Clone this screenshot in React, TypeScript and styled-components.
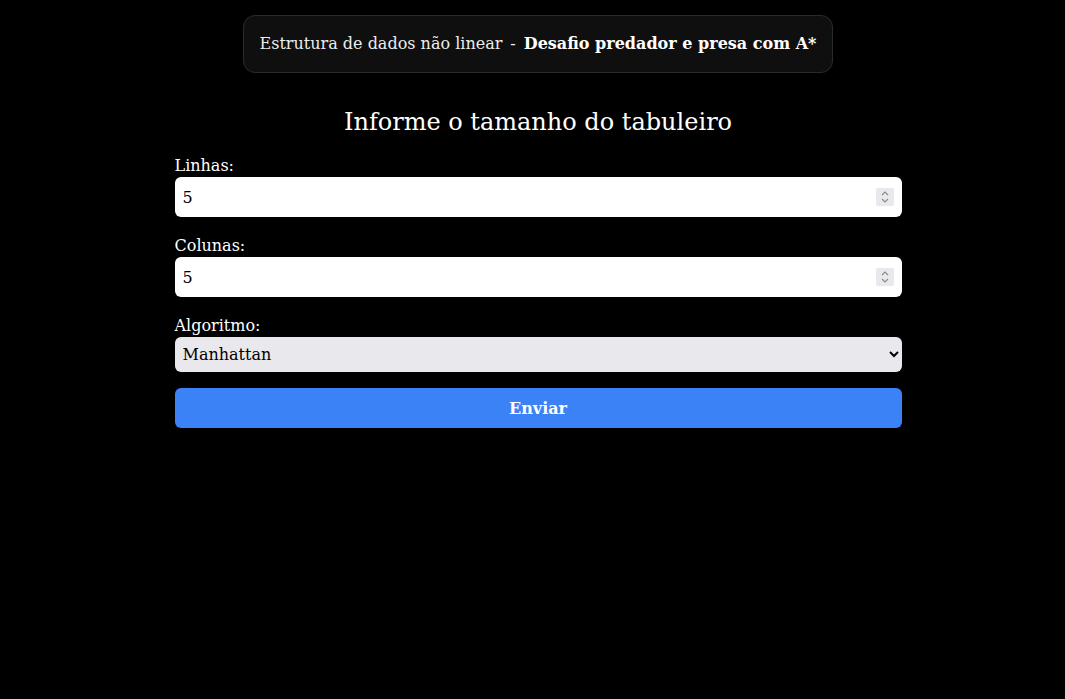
import styled, { createGlobalStyle } from "styled-components";

const GlobalStyle = createGlobalStyle`
  html, body {
    margin: 0;
    padding: 0;
    background: #000;
  }

  body {
    font-family: "DejaVu Serif", serif;
    color: #fff;
  }
`;

const SpinIcon = () => (
  <svg width="10" height="14" viewBox="0 0 10 14" fill="none">
    <path d="M2 5l3-3 3 3" stroke="#8a8a90" strokeWidth="1.2" />
    <path d="M2 9l3 3 3-3" stroke="#8a8a90" strokeWidth="1.2" />
  </svg>
);

const NumberField = ({ id }: { id: string }) => (
  <InputWrap>
    <Input id={id} type="number" defaultValue={5} />
    <Spinner>
      <SpinIcon />
    </Spinner>
  </InputWrap>
);

const App = () => {
  return (
    <>
      <GlobalStyle />
      <Page>
        <Header>
          <span>Estrutura de dados não linear</span>
          <span>-</span>
          <Strong>Desafio predador e presa com A*</Strong>
        </Header>
        <Title>Informe o tamanho do tabuleiro</Title>
        <Form onSubmit={(e) => e.preventDefault()}>
          <Field>
            <Label htmlFor="linhas">Linhas:</Label>
            <NumberField id="linhas" />
          </Field>
          <Field>
            <Label htmlFor="colunas">Colunas:</Label>
            <NumberField id="colunas" />
          </Field>
          <Field>
            <Label htmlFor="algoritmo">Algoritmo:</Label>
            <Select id="algoritmo" defaultValue="manhattan">
              <option value="manhattan">Manhattan</option>
              <option value="euclidiana">Euclidiana</option>
            </Select>
          </Field>
          <Button type="submit">Enviar</Button>
        </Form>
      </Page>
    </>
  );
};

export default App;

const Page = styled.main`
  display: flex;
  flex-direction: column;
  align-items: center;
  min-height: 699px;
  box-sizing: border-box;
  padding: 15px 0 0 11px;
`;

const Header = styled.header`
  display: flex;
  align-items: center;
  gap: 8px;
  padding: 18px 16px;
  background: #0f0f0f;
  border: 1px solid #2a2a2a;
  border-radius: 12px;
  font-size: 16px;
  line-height: 20px;
  color: #ededed;
`;

const Strong = styled.strong`
  font-weight: 700;
  color: #fff;
`;

const Title = styled.h1`
  margin: 35px 0 20px;
  font-size: 24px;
  font-weight: 400;
  line-height: 28px;
`;

const Form = styled.form`
  width: 727px;
  display: flex;
  flex-direction: column;
`;

const Field = styled.div`
  display: flex;
  flex-direction: column;
  margin-bottom: 19px;

  &:last-of-type {
    margin-bottom: 16px;
  }
`;

const Label = styled.label`
  font-size: 16px;
  line-height: 19px;
  margin-bottom: 2px;
`;

const InputWrap = styled.div`
  position: relative;
  display: flex;
`;

const Input = styled.input`
  flex: 1;
  height: 40px;
  box-sizing: border-box;
  padding: 0 30px 0 8px;
  border: none;
  border-radius: 6px;
  background: #fff;
  color: #000;
  font-family: "DejaVu Serif", serif;
  font-size: 16px;
  outline: none;
  -moz-appearance: textfield;

  &::-webkit-inner-spin-button,
  &::-webkit-outer-spin-button {
    -webkit-appearance: none;
    margin: 0;
  }
`;

const Spinner = styled.span`
  position: absolute;
  right: 8px;
  top: 11px;
  width: 18px;
  height: 18px;
  display: flex;
  align-items: center;
  justify-content: center;
  background: #e9e8ed;
  border-radius: 2px;
  pointer-events: none;
`;

const Select = styled.select`
  height: 35px;
  box-sizing: border-box;
  padding: 0 4px;
  border: none;
  border-radius: 6px;
  background: #e9e8ed;
  color: #000;
  font-family: "DejaVu Serif", serif;
  font-size: 16px;
  outline: none;
`;

const Button = styled.button`
  height: 40px;
  border: none;
  border-radius: 6px;
  background: #3b82f6;
  color: #fff;
  font-family: "DejaVu Serif", serif;
  font-size: 16px;
  font-weight: 700;
  cursor: pointer;
`;
